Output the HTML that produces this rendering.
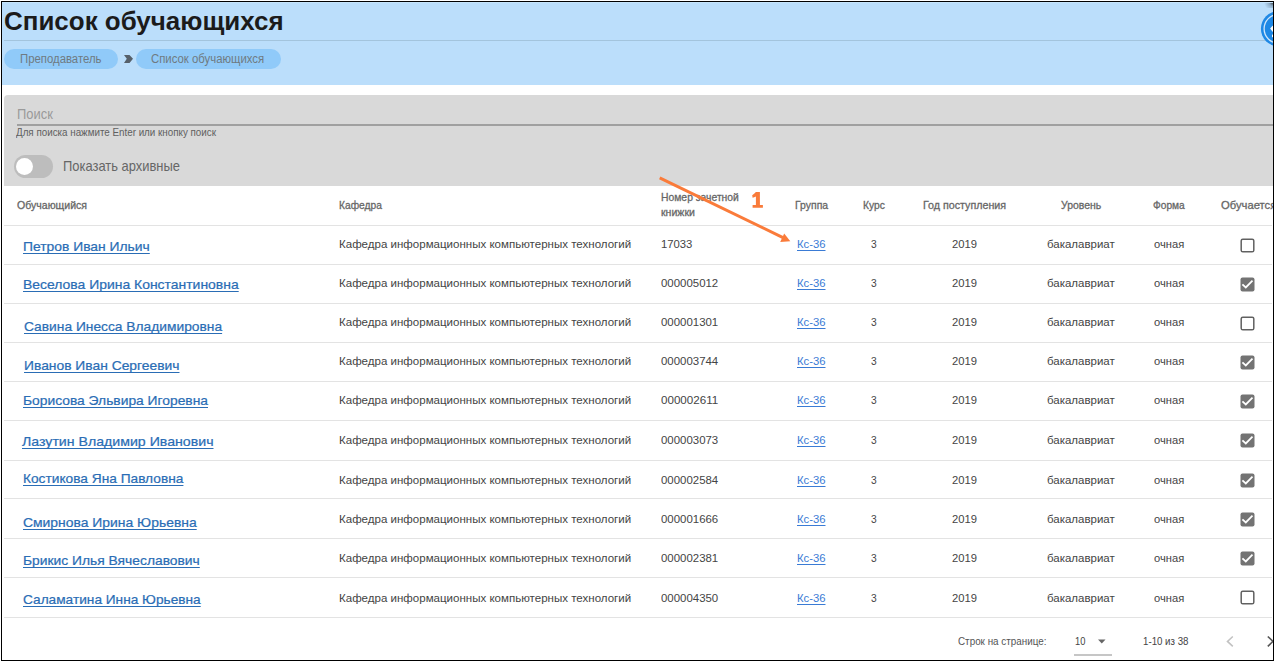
<!DOCTYPE html>
<html><head><meta charset="utf-8">
<style>
html,body{margin:0;padding:0;background:#fff;}
body{width:1276px;height:662px;position:relative;overflow:hidden;font-family:"Liberation Sans",sans-serif;}
.t{position:absolute;white-space:nowrap;line-height:40px;transform-origin:0 50%;}
.name{font-family:"Liberation Sans",sans-serif;text-decoration:underline;text-decoration-skip-ink:none;text-decoration-thickness:1.2px;text-underline-offset:2.1px;}
.link{text-decoration:underline;text-decoration-skip-ink:none;text-decoration-thickness:1px;text-underline-offset:1.5px;}
#hdr{position:absolute;left:2px;top:2px;width:1271px;height:83px;background:#bbdefb;}
#hline{position:absolute;left:4px;top:40px;width:1262px;height:1px;background:#a3c4dd;}
.pill{position:absolute;top:49px;height:20px;border-radius:10px;background:#90caf9;}
#panel{position:absolute;left:4px;top:95px;width:1269px;height:91px;background:#d9d9d9;border-radius:4px 0 0 0;}
#sline{position:absolute;left:17px;top:124px;width:1256px;height:1.5px;background:#a0a0a0;}
#track{position:absolute;left:13.5px;top:155px;width:39px;height:23px;border-radius:11.5px;background:#bdbdbd;}
#thumb{position:absolute;left:16.2px;top:158px;width:17px;height:17px;border-radius:50%;background:#fff;}
.sep{position:absolute;left:4px;width:1268px;height:1px;background:#e3e3e3;}
.cb{position:absolute;left:1240px;}
#border{position:absolute;left:1px;top:1px;width:1271px;height:658px;border:1px solid #000;}
</style></head>
<body>
<div id="clip" style="position:absolute;left:0;top:0;width:1274px;height:661px;overflow:hidden">
<div id="hdr"></div>
<div id="hline"></div>
<div class="pill" style="left:4px;width:114px"></div>
<div class="pill" style="left:135.5px;width:145.5px"></div>
<svg style="position:absolute;left:123px;top:54px" width="11" height="10" viewBox="0 0 11 10"><path d="M1 1 L6.5 1 L10 4.8 L6.5 9 L1 9 L3.8 4.8 Z" fill="#56606a"/></svg>
<div style="position:absolute;left:1250px;top:2px;width:23px;height:60px;overflow:hidden"><svg width="40" height="60" viewBox="0 0 40 60" style="position:absolute;left:0;top:0"><circle cx="28.5" cy="26.8" r="17.6" fill="#1e88e5"/><circle cx="28.5" cy="26.8" r="14.4" fill="none" stroke="#cfe6fa" stroke-width="1.3"/><path d="M20.1 26.6 L22.6 23.8 L23 23.8 L23 29.8 L22.6 29.8 Z" fill="#fff"/><rect x="22" y="32.6" width="1" height="2.6" fill="#fff"/></svg><div style="position:absolute;right:0;top:0;width:10px;height:6px;background:radial-gradient(circle at 100% 0%, rgba(40,40,40,0.9) 0px, rgba(60,80,100,0.35) 4px, rgba(120,150,180,0) 9px)"></div></div>
<div style="position:absolute;left:2px;top:2px;width:1271px;height:1px;background:#c6e5fc"></div>
<div id="panel"></div>
<div id="sline"></div>
<div id="track"></div>
<div id="thumb"></div>
<div class="sep" style="top:225px"></div>
<div class="sep" style="top:264px"></div>
<div class="sep" style="top:303px"></div>
<div class="sep" style="top:342px"></div>
<div class="sep" style="top:381px"></div>
<div class="sep" style="top:420px"></div>
<div class="sep" style="top:460px"></div>
<div class="sep" style="top:498px"></div>
<div class="sep" style="top:538px"></div>
<div class="sep" style="top:577px"></div>
<div class="sep" style="top:617px"></div>
<div class="sep" style="top:617px;left:4px;width:1268px"></div>
<svg class="cb" style="top:237.8px" width="15" height="15" viewBox="0 0 15 15"><rect x="1.2" y="1.2" width="12.6" height="12.6" rx="1.6" fill="none" stroke="#616161" stroke-width="1.5"/></svg>
<svg class="cb" style="top:276.6px" width="15" height="15" viewBox="0 0 15 15"><rect x="0.5" y="0.5" width="14" height="14" rx="2" fill="#737373"/><path d="M2.4 7.3 L5.8 10.4 L12.5 3.7" stroke="#fff" stroke-width="1.8" fill="none"/></svg>
<svg class="cb" style="top:315.9px" width="15" height="15" viewBox="0 0 15 15"><rect x="1.2" y="1.2" width="12.6" height="12.6" rx="1.6" fill="none" stroke="#616161" stroke-width="1.5"/></svg>
<svg class="cb" style="top:354.8px" width="15" height="15" viewBox="0 0 15 15"><rect x="0.5" y="0.5" width="14" height="14" rx="2" fill="#737373"/><path d="M2.4 7.3 L5.8 10.4 L12.5 3.7" stroke="#fff" stroke-width="1.8" fill="none"/></svg>
<svg class="cb" style="top:393.6px" width="15" height="15" viewBox="0 0 15 15"><rect x="0.5" y="0.5" width="14" height="14" rx="2" fill="#737373"/><path d="M2.4 7.3 L5.8 10.4 L12.5 3.7" stroke="#fff" stroke-width="1.8" fill="none"/></svg>
<svg class="cb" style="top:433.1px" width="15" height="15" viewBox="0 0 15 15"><rect x="0.5" y="0.5" width="14" height="14" rx="2" fill="#737373"/><path d="M2.4 7.3 L5.8 10.4 L12.5 3.7" stroke="#fff" stroke-width="1.8" fill="none"/></svg>
<svg class="cb" style="top:472.6px" width="15" height="15" viewBox="0 0 15 15"><rect x="0.5" y="0.5" width="14" height="14" rx="2" fill="#737373"/><path d="M2.4 7.3 L5.8 10.4 L12.5 3.7" stroke="#fff" stroke-width="1.8" fill="none"/></svg>
<svg class="cb" style="top:511.5px" width="15" height="15" viewBox="0 0 15 15"><rect x="0.5" y="0.5" width="14" height="14" rx="2" fill="#737373"/><path d="M2.4 7.3 L5.8 10.4 L12.5 3.7" stroke="#fff" stroke-width="1.8" fill="none"/></svg>
<svg class="cb" style="top:550.7px" width="15" height="15" viewBox="0 0 15 15"><rect x="0.5" y="0.5" width="14" height="14" rx="2" fill="#737373"/><path d="M2.4 7.3 L5.8 10.4 L12.5 3.7" stroke="#fff" stroke-width="1.8" fill="none"/></svg>
<svg class="cb" style="top:590.3px" width="15" height="15" viewBox="0 0 15 15"><rect x="1.2" y="1.2" width="12.6" height="12.6" rx="1.6" fill="none" stroke="#616161" stroke-width="1.5"/></svg>
<svg style="position:absolute;left:1097px;top:639px" width="10" height="6" viewBox="0 0 10 6"><path d="M1 0.5 L8.5 0.5 L4.75 4.5 Z" fill="#666"/></svg>
<div style="position:absolute;left:1074px;top:653.5px;width:37.5px;height:2px;background:#c6c6c6"></div>
<svg style="position:absolute;left:1224px;top:634px" width="12" height="15" viewBox="0 0 12 15"><path d="M8.8 2.5 L3.5 7.4 L8.8 12.3" stroke="#c2c2c2" stroke-width="1.6" fill="none"/></svg>
<svg style="position:absolute;left:1264px;top:634px" width="12" height="15" viewBox="0 0 12 15"><path d="M3.8 2.5 L9 7.4 L3.8 12.3" stroke="#555" stroke-width="1.6" fill="none"/></svg>
<div class="t" style="left:4.20px;top:0.68px;font-size:26.6px;font-weight:700;color:#1b1b1b;transform:scaleX(0.9755)">Список обучающихся</div>
<div class="t" style="left:19.80px;top:39.04px;font-size:12px;font-weight:400;color:#6f7a82;transform:scaleX(0.9465)">Преподаватель</div>
<div class="t" style="left:151.20px;top:39.04px;font-size:12px;font-weight:400;color:#6f7a82;transform:scaleX(0.9479)">Список обучающихся</div>
<div class="t" style="left:16.90px;top:93.75px;font-size:14px;font-weight:400;color:#9a9a9a;transform:scaleX(0.9228)">Поиск</div>
<div class="t" style="left:16.30px;top:112.93px;font-size:10.3px;font-weight:400;color:#606060;transform:scaleX(0.9527)">Для поиска нажмите Enter или кнопку поиск</div>
<div class="t" style="left:62.50px;top:145.87px;font-size:14.5px;font-weight:400;color:#666;transform:scaleX(0.8919)">Показать архивные</div>
<div class="t" style="left:16.50px;top:185.02px;font-size:11.2px;font-weight:400;color:#666;transform:scaleX(0.9439);-webkit-text-stroke:0.3px #666">Обучающийся</div>
<div class="t" style="left:339.20px;top:185.02px;font-size:11.2px;font-weight:400;color:#666;transform:scaleX(0.9146);-webkit-text-stroke:0.3px #666">Кафедра</div>
<div class="t" style="left:661.20px;top:177.42px;font-size:11.2px;font-weight:400;color:#666;transform:scaleX(0.9262);-webkit-text-stroke:0.3px #666">Номер зачетной</div>
<div class="t" style="left:661.20px;top:191.92px;font-size:11.2px;font-weight:400;color:#666;transform:scaleX(0.9429);-webkit-text-stroke:0.3px #666">книжки</div>
<div class="t" style="left:794.50px;top:185.02px;font-size:11.2px;font-weight:400;color:#666;transform:scaleX(0.9332);-webkit-text-stroke:0.3px #666">Группа</div>
<div class="t" style="left:862.50px;top:185.02px;font-size:11.2px;font-weight:400;color:#666;transform:scaleX(0.9197);-webkit-text-stroke:0.3px #666">Курс</div>
<div class="t" style="left:922.80px;top:185.02px;font-size:11.2px;font-weight:400;color:#666;transform:scaleX(0.9559);-webkit-text-stroke:0.3px #666">Год поступления</div>
<div class="t" style="left:1060.70px;top:185.02px;font-size:11.2px;font-weight:400;color:#666;transform:scaleX(0.9348);-webkit-text-stroke:0.3px #666">Уровень</div>
<div class="t" style="left:1152.80px;top:185.02px;font-size:11.2px;font-weight:400;color:#666;transform:scaleX(0.9118);-webkit-text-stroke:0.3px #666">Форма</div>
<div class="t" style="left:1221.30px;top:185.02px;font-size:11.2px;font-weight:400;color:#666;transform:scaleX(1.0052);-webkit-text-stroke:0.3px #666">Обучается</div>
<div class="t name" style="left:22.80px;top:227.13px;font-size:12.9px;font-weight:400;color:#2a6db5;transform:scaleX(1.0751);-webkit-text-stroke:0.22px #2a6db5">Петров Иван Ильич</div>
<div class="t" style="left:339.20px;top:224.16px;font-size:11.5px;font-weight:400;color:#444;transform:scaleX(1.0027)">Кафедра информационных компьютерных технологий</div>
<div class="t" style="left:661.40px;top:224.16px;font-size:11.5px;font-weight:400;color:#444;transform:scaleX(0.9817)">17033</div>
<div class="t link" style="left:796.80px;top:224.16px;font-size:11.5px;font-weight:400;color:#3a7bd5;transform:scaleX(0.9801)">Кс-36</div>
<div class="t" style="left:870.50px;top:224.16px;font-size:11.5px;font-weight:400;color:#444;transform:scaleX(0.8898)">3</div>
<div class="t" style="left:951.60px;top:224.16px;font-size:11.5px;font-weight:400;color:#444;transform:scaleX(0.9768)">2019</div>
<div class="t" style="left:1047.00px;top:224.16px;font-size:11.5px;font-weight:400;color:#444;transform:scaleX(0.9979)">бакалавриат</div>
<div class="t" style="left:1153.50px;top:224.16px;font-size:11.5px;font-weight:400;color:#444;transform:scaleX(0.9708)">очная</div>
<div class="t name" style="left:22.80px;top:264.93px;font-size:12.9px;font-weight:400;color:#2a6db5;transform:scaleX(1.0808);-webkit-text-stroke:0.22px #2a6db5">Веселова Ирина Константиновна</div>
<div class="t" style="left:339.20px;top:263.15px;font-size:11.5px;font-weight:400;color:#444;transform:scaleX(1.0027)">Кафедра информационных компьютерных технологий</div>
<div class="t" style="left:661.40px;top:263.15px;font-size:11.5px;font-weight:400;color:#444;transform:scaleX(0.9937)">000005012</div>
<div class="t link" style="left:796.80px;top:263.15px;font-size:11.5px;font-weight:400;color:#3a7bd5;transform:scaleX(0.9801)">Кс-36</div>
<div class="t" style="left:870.50px;top:263.15px;font-size:11.5px;font-weight:400;color:#444;transform:scaleX(0.8898)">3</div>
<div class="t" style="left:951.60px;top:263.15px;font-size:11.5px;font-weight:400;color:#444;transform:scaleX(0.9768)">2019</div>
<div class="t" style="left:1047.00px;top:263.15px;font-size:11.5px;font-weight:400;color:#444;transform:scaleX(0.9979)">бакалавриат</div>
<div class="t" style="left:1153.50px;top:263.15px;font-size:11.5px;font-weight:400;color:#444;transform:scaleX(0.9708)">очная</div>
<div class="t name" style="left:23.70px;top:307.13px;font-size:12.9px;font-weight:400;color:#2a6db5;transform:scaleX(1.0691);-webkit-text-stroke:0.22px #2a6db5">Савина Инесса Владимировна</div>
<div class="t" style="left:339.20px;top:302.44px;font-size:11.5px;font-weight:400;color:#444;transform:scaleX(1.0027)">Кафедра информационных компьютерных технологий</div>
<div class="t" style="left:661.40px;top:302.44px;font-size:11.5px;font-weight:400;color:#444;transform:scaleX(0.9937)">000001301</div>
<div class="t link" style="left:796.80px;top:302.44px;font-size:11.5px;font-weight:400;color:#3a7bd5;transform:scaleX(0.9801)">Кс-36</div>
<div class="t" style="left:870.50px;top:302.44px;font-size:11.5px;font-weight:400;color:#444;transform:scaleX(0.8898)">3</div>
<div class="t" style="left:951.60px;top:302.44px;font-size:11.5px;font-weight:400;color:#444;transform:scaleX(0.9768)">2019</div>
<div class="t" style="left:1047.00px;top:302.44px;font-size:11.5px;font-weight:400;color:#444;transform:scaleX(0.9979)">бакалавриат</div>
<div class="t" style="left:1153.50px;top:302.44px;font-size:11.5px;font-weight:400;color:#444;transform:scaleX(0.9708)">очная</div>
<div class="t name" style="left:23.70px;top:345.53px;font-size:12.9px;font-weight:400;color:#2a6db5;transform:scaleX(1.0733);-webkit-text-stroke:0.22px #2a6db5">Иванов Иван Сергеевич</div>
<div class="t" style="left:339.20px;top:341.43px;font-size:11.5px;font-weight:400;color:#444;transform:scaleX(1.0027)">Кафедра информационных компьютерных технологий</div>
<div class="t" style="left:661.40px;top:341.43px;font-size:11.5px;font-weight:400;color:#444;transform:scaleX(0.9937)">000003744</div>
<div class="t link" style="left:796.80px;top:341.43px;font-size:11.5px;font-weight:400;color:#3a7bd5;transform:scaleX(0.9801)">Кс-36</div>
<div class="t" style="left:870.50px;top:341.43px;font-size:11.5px;font-weight:400;color:#444;transform:scaleX(0.8898)">3</div>
<div class="t" style="left:951.60px;top:341.43px;font-size:11.5px;font-weight:400;color:#444;transform:scaleX(0.9768)">2019</div>
<div class="t" style="left:1047.00px;top:341.43px;font-size:11.5px;font-weight:400;color:#444;transform:scaleX(0.9979)">бакалавриат</div>
<div class="t" style="left:1153.50px;top:341.43px;font-size:11.5px;font-weight:400;color:#444;transform:scaleX(0.9708)">очная</div>
<div class="t name" style="left:22.80px;top:380.93px;font-size:12.9px;font-weight:400;color:#2a6db5;transform:scaleX(1.0719);-webkit-text-stroke:0.22px #2a6db5">Борисова Эльвира Игоревна</div>
<div class="t" style="left:339.20px;top:380.42px;font-size:11.5px;font-weight:400;color:#444;transform:scaleX(1.0027)">Кафедра информационных компьютерных технологий</div>
<div class="t" style="left:661.40px;top:380.42px;font-size:11.5px;font-weight:400;color:#444;transform:scaleX(1.0085)">000002611</div>
<div class="t link" style="left:796.80px;top:380.42px;font-size:11.5px;font-weight:400;color:#3a7bd5;transform:scaleX(0.9801)">Кс-36</div>
<div class="t" style="left:870.50px;top:380.42px;font-size:11.5px;font-weight:400;color:#444;transform:scaleX(0.8898)">3</div>
<div class="t" style="left:951.60px;top:380.42px;font-size:11.5px;font-weight:400;color:#444;transform:scaleX(0.9768)">2019</div>
<div class="t" style="left:1047.00px;top:380.42px;font-size:11.5px;font-weight:400;color:#444;transform:scaleX(0.9979)">бакалавриат</div>
<div class="t" style="left:1153.50px;top:380.42px;font-size:11.5px;font-weight:400;color:#444;transform:scaleX(0.9708)">очная</div>
<div class="t name" style="left:22.30px;top:421.73px;font-size:12.9px;font-weight:400;color:#2a6db5;transform:scaleX(1.0973);-webkit-text-stroke:0.22px #2a6db5">Лазутин Владимир Иванович</div>
<div class="t" style="left:339.20px;top:420.01px;font-size:11.5px;font-weight:400;color:#444;transform:scaleX(1.0027)">Кафедра информационных компьютерных технологий</div>
<div class="t" style="left:661.40px;top:420.01px;font-size:11.5px;font-weight:400;color:#444;transform:scaleX(0.9937)">000003073</div>
<div class="t link" style="left:796.80px;top:420.01px;font-size:11.5px;font-weight:400;color:#3a7bd5;transform:scaleX(0.9801)">Кс-36</div>
<div class="t" style="left:870.50px;top:420.01px;font-size:11.5px;font-weight:400;color:#444;transform:scaleX(0.8898)">3</div>
<div class="t" style="left:951.60px;top:420.01px;font-size:11.5px;font-weight:400;color:#444;transform:scaleX(0.9768)">2019</div>
<div class="t" style="left:1047.00px;top:420.01px;font-size:11.5px;font-weight:400;color:#444;transform:scaleX(0.9979)">бакалавриат</div>
<div class="t" style="left:1153.50px;top:420.01px;font-size:11.5px;font-weight:400;color:#444;transform:scaleX(0.9708)">очная</div>
<div class="t name" style="left:22.80px;top:459.43px;font-size:12.9px;font-weight:400;color:#2a6db5;transform:scaleX(1.0638);-webkit-text-stroke:0.22px #2a6db5">Костикова Яна Павловна</div>
<div class="t" style="left:339.20px;top:459.50px;font-size:11.5px;font-weight:400;color:#444;transform:scaleX(1.0027)">Кафедра информационных компьютерных технологий</div>
<div class="t" style="left:661.40px;top:459.50px;font-size:11.5px;font-weight:400;color:#444;transform:scaleX(0.9937)">000002584</div>
<div class="t link" style="left:796.80px;top:459.50px;font-size:11.5px;font-weight:400;color:#3a7bd5;transform:scaleX(0.9801)">Кс-36</div>
<div class="t" style="left:870.50px;top:459.50px;font-size:11.5px;font-weight:400;color:#444;transform:scaleX(0.8898)">3</div>
<div class="t" style="left:951.60px;top:459.50px;font-size:11.5px;font-weight:400;color:#444;transform:scaleX(0.9768)">2019</div>
<div class="t" style="left:1047.00px;top:459.50px;font-size:11.5px;font-weight:400;color:#444;transform:scaleX(0.9979)">бакалавриат</div>
<div class="t" style="left:1153.50px;top:459.50px;font-size:11.5px;font-weight:400;color:#444;transform:scaleX(0.9708)">очная</div>
<div class="t name" style="left:22.80px;top:502.53px;font-size:12.9px;font-weight:400;color:#2a6db5;transform:scaleX(1.0788);-webkit-text-stroke:0.22px #2a6db5">Смирнова Ирина Юрьевна</div>
<div class="t" style="left:339.20px;top:498.59px;font-size:11.5px;font-weight:400;color:#444;transform:scaleX(1.0027)">Кафедра информационных компьютерных технологий</div>
<div class="t" style="left:661.40px;top:498.59px;font-size:11.5px;font-weight:400;color:#444;transform:scaleX(0.9937)">000001666</div>
<div class="t link" style="left:796.80px;top:498.59px;font-size:11.5px;font-weight:400;color:#3a7bd5;transform:scaleX(0.9801)">Кс-36</div>
<div class="t" style="left:870.50px;top:498.59px;font-size:11.5px;font-weight:400;color:#444;transform:scaleX(0.8898)">3</div>
<div class="t" style="left:951.60px;top:498.59px;font-size:11.5px;font-weight:400;color:#444;transform:scaleX(0.9768)">2019</div>
<div class="t" style="left:1047.00px;top:498.59px;font-size:11.5px;font-weight:400;color:#444;transform:scaleX(0.9979)">бакалавриат</div>
<div class="t" style="left:1153.50px;top:498.59px;font-size:11.5px;font-weight:400;color:#444;transform:scaleX(0.9708)">очная</div>
<div class="t name" style="left:22.80px;top:541.23px;font-size:12.9px;font-weight:400;color:#2a6db5;transform:scaleX(1.0724);-webkit-text-stroke:0.22px #2a6db5">Брикис Илья Вячеславович</div>
<div class="t" style="left:339.20px;top:537.83px;font-size:11.5px;font-weight:400;color:#444;transform:scaleX(1.0027)">Кафедра информационных компьютерных технологий</div>
<div class="t" style="left:661.40px;top:537.83px;font-size:11.5px;font-weight:400;color:#444;transform:scaleX(0.9937)">000002381</div>
<div class="t link" style="left:796.80px;top:537.83px;font-size:11.5px;font-weight:400;color:#3a7bd5;transform:scaleX(0.9801)">Кс-36</div>
<div class="t" style="left:870.50px;top:537.83px;font-size:11.5px;font-weight:400;color:#444;transform:scaleX(0.8898)">3</div>
<div class="t" style="left:951.60px;top:537.83px;font-size:11.5px;font-weight:400;color:#444;transform:scaleX(0.9768)">2019</div>
<div class="t" style="left:1047.00px;top:537.83px;font-size:11.5px;font-weight:400;color:#444;transform:scaleX(0.9979)">бакалавриат</div>
<div class="t" style="left:1153.50px;top:537.83px;font-size:11.5px;font-weight:400;color:#444;transform:scaleX(0.9708)">очная</div>
<div class="t name" style="left:22.80px;top:579.83px;font-size:12.9px;font-weight:400;color:#2a6db5;transform:scaleX(1.0608);-webkit-text-stroke:0.22px #2a6db5">Саламатина Инна Юрьевна</div>
<div class="t" style="left:339.20px;top:577.52px;font-size:11.5px;font-weight:400;color:#444;transform:scaleX(1.0027)">Кафедра информационных компьютерных технологий</div>
<div class="t" style="left:661.40px;top:577.52px;font-size:11.5px;font-weight:400;color:#444;transform:scaleX(0.9937)">000004350</div>
<div class="t link" style="left:796.80px;top:577.52px;font-size:11.5px;font-weight:400;color:#3a7bd5;transform:scaleX(0.9801)">Кс-36</div>
<div class="t" style="left:870.50px;top:577.52px;font-size:11.5px;font-weight:400;color:#444;transform:scaleX(0.8898)">3</div>
<div class="t" style="left:951.60px;top:577.52px;font-size:11.5px;font-weight:400;color:#444;transform:scaleX(0.9768)">2019</div>
<div class="t" style="left:1047.00px;top:577.52px;font-size:11.5px;font-weight:400;color:#444;transform:scaleX(0.9979)">бакалавриат</div>
<div class="t" style="left:1153.50px;top:577.52px;font-size:11.5px;font-weight:400;color:#444;transform:scaleX(0.9708)">очная</div>
<div class="t" style="left:957.50px;top:620.99px;font-size:11px;font-weight:400;color:#555;transform:scaleX(0.8968)">Строк на странице:</div>
<div class="t" style="left:1074.80px;top:620.99px;font-size:11px;font-weight:400;color:#444;transform:scaleX(0.8490)">10</div>
<div class="t" style="left:1143.30px;top:620.69px;font-size:11px;font-weight:400;color:#444;transform:scaleX(0.8824)">1-10 из 38</div>
<svg style="position:absolute;left:0;top:0" width="1276" height="662"><line x1="659.7" y1="177.9" x2="783" y2="237.6" stroke="#fa7b3a" stroke-width="3"/><path d="M790.3 241.3 L784.2 233.6 L780.2 241.9 Z" fill="#fa7b3a"/><path d="M755.9 192 L759.9 192 L759.9 204.9 L762.9 204.9 L762.9 207.8 L752.6 207.8 L752.6 204.9 L755.9 204.9 L755.9 196.6 Q754.2 197.3 752.6 197.8 L752.2 195.3 Q754.2 193.9 755.9 192 Z" fill="#f97b3a"/></svg>
</div>
<div id="border"></div>
</body></html>
